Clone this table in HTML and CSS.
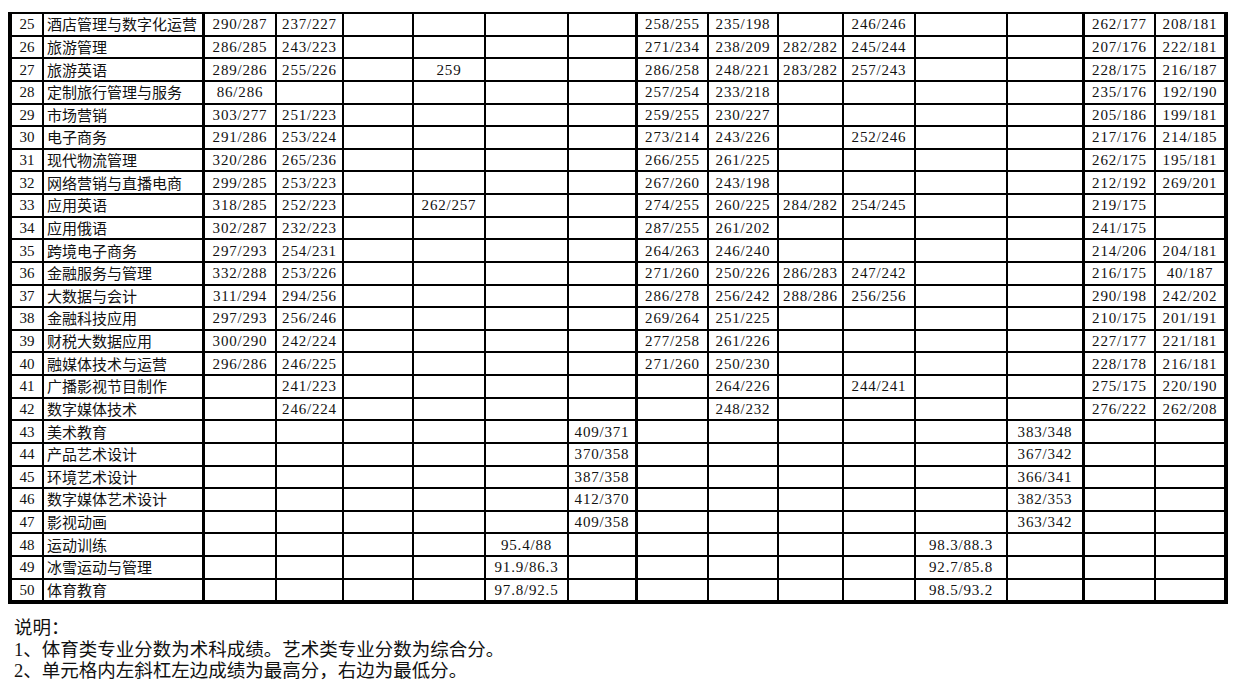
FILE: index.html
```html
<!DOCTYPE html>
<html lang="zh-CN">
<head>
<meta charset="utf-8">
<title>分数表</title>
<link rel="stylesheet" href="styles.css">
</head>
<body>
<div class="page">
<table class="scores">
<colgroup>
<col class="w-num"><col class="w-name"><col class="w-c1"><col class="w-c2"><col class="w-c3"><col class="w-c4"><col class="w-c5"><col class="w-c6"><col class="w-c7"><col class="w-c8"><col class="w-c9"><col class="w-c10"><col class="w-c11"><col class="w-c12"><col class="w-c13"><col class="w-c14">
</colgroup>
<tbody>
<tr><td>25</td><td class="nm">酒店管理与数字化运营</td><td>290/287</td><td>237/227</td><td></td><td></td><td></td><td></td><td>258/255</td><td>235/198</td><td></td><td>246/246</td><td></td><td></td><td>262/177</td><td>208/181</td></tr>
<tr><td>26</td><td class="nm">旅游管理</td><td>286/285</td><td>243/223</td><td></td><td></td><td></td><td></td><td>271/234</td><td>238/209</td><td>282/282</td><td>245/244</td><td></td><td></td><td>207/176</td><td>222/181</td></tr>
<tr><td>27</td><td class="nm">旅游英语</td><td>289/286</td><td>255/226</td><td></td><td>259</td><td></td><td></td><td>286/258</td><td>248/221</td><td>283/282</td><td>257/243</td><td></td><td></td><td>228/175</td><td>216/187</td></tr>
<tr><td>28</td><td class="nm">定制旅行管理与服务</td><td>86/286</td><td></td><td></td><td></td><td></td><td></td><td>257/254</td><td>233/218</td><td></td><td></td><td></td><td></td><td>235/176</td><td>192/190</td></tr>
<tr><td>29</td><td class="nm">市场营销</td><td>303/277</td><td>251/223</td><td></td><td></td><td></td><td></td><td>259/255</td><td>230/227</td><td></td><td></td><td></td><td></td><td>205/186</td><td>199/181</td></tr>
<tr><td>30</td><td class="nm">电子商务</td><td>291/286</td><td>253/224</td><td></td><td></td><td></td><td></td><td>273/214</td><td>243/226</td><td></td><td>252/246</td><td></td><td></td><td>217/176</td><td>214/185</td></tr>
<tr><td>31</td><td class="nm">现代物流管理</td><td>320/286</td><td>265/236</td><td></td><td></td><td></td><td></td><td>266/255</td><td>261/225</td><td></td><td></td><td></td><td></td><td>262/175</td><td>195/181</td></tr>
<tr><td>32</td><td class="nm">网络营销与直播电商</td><td>299/285</td><td>253/223</td><td></td><td></td><td></td><td></td><td>267/260</td><td>243/198</td><td></td><td></td><td></td><td></td><td>212/192</td><td>269/201</td></tr>
<tr><td>33</td><td class="nm">应用英语</td><td>318/285</td><td>252/223</td><td></td><td>262/257</td><td></td><td></td><td>274/255</td><td>260/225</td><td>284/282</td><td>254/245</td><td></td><td></td><td>219/175</td><td></td></tr>
<tr><td>34</td><td class="nm">应用俄语</td><td>302/287</td><td>232/223</td><td></td><td></td><td></td><td></td><td>287/255</td><td>261/202</td><td></td><td></td><td></td><td></td><td>241/175</td><td></td></tr>
<tr><td>35</td><td class="nm">跨境电子商务</td><td>297/293</td><td>254/231</td><td></td><td></td><td></td><td></td><td>264/263</td><td>246/240</td><td></td><td></td><td></td><td></td><td>214/206</td><td>204/181</td></tr>
<tr><td>36</td><td class="nm">金融服务与管理</td><td>332/288</td><td>253/226</td><td></td><td></td><td></td><td></td><td>271/260</td><td>250/226</td><td>286/283</td><td>247/242</td><td></td><td></td><td>216/175</td><td>40/187</td></tr>
<tr><td>37</td><td class="nm">大数据与会计</td><td>311/294</td><td>294/256</td><td></td><td></td><td></td><td></td><td>286/278</td><td>256/242</td><td>288/286</td><td>256/256</td><td></td><td></td><td>290/198</td><td>242/202</td></tr>
<tr><td>38</td><td class="nm">金融科技应用</td><td>297/293</td><td>256/246</td><td></td><td></td><td></td><td></td><td>269/264</td><td>251/225</td><td></td><td></td><td></td><td></td><td>210/175</td><td>201/191</td></tr>
<tr><td>39</td><td class="nm">财税大数据应用</td><td>300/290</td><td>242/224</td><td></td><td></td><td></td><td></td><td>277/258</td><td>261/226</td><td></td><td></td><td></td><td></td><td>227/177</td><td>221/181</td></tr>
<tr><td>40</td><td class="nm">融媒体技术与运营</td><td>296/286</td><td>246/225</td><td></td><td></td><td></td><td></td><td>271/260</td><td>250/230</td><td></td><td></td><td></td><td></td><td>228/178</td><td>216/181</td></tr>
<tr><td>41</td><td class="nm">广播影视节目制作</td><td></td><td>241/223</td><td></td><td></td><td></td><td></td><td></td><td>264/226</td><td></td><td>244/241</td><td></td><td></td><td>275/175</td><td>220/190</td></tr>
<tr><td>42</td><td class="nm">数字媒体技术</td><td></td><td>246/224</td><td></td><td></td><td></td><td></td><td></td><td>248/232</td><td></td><td></td><td></td><td></td><td>276/222</td><td>262/208</td></tr>
<tr><td>43</td><td class="nm">美术教育</td><td></td><td></td><td></td><td></td><td></td><td>409/371</td><td></td><td></td><td></td><td></td><td></td><td>383/348</td><td></td><td></td></tr>
<tr><td>44</td><td class="nm">产品艺术设计</td><td></td><td></td><td></td><td></td><td></td><td>370/358</td><td></td><td></td><td></td><td></td><td></td><td>367/342</td><td></td><td></td></tr>
<tr><td>45</td><td class="nm">环境艺术设计</td><td></td><td></td><td></td><td></td><td></td><td>387/358</td><td></td><td></td><td></td><td></td><td></td><td>366/341</td><td></td><td></td></tr>
<tr><td>46</td><td class="nm">数字媒体艺术设计</td><td></td><td></td><td></td><td></td><td></td><td>412/370</td><td></td><td></td><td></td><td></td><td></td><td>382/353</td><td></td><td></td></tr>
<tr><td>47</td><td class="nm">影视动画</td><td></td><td></td><td></td><td></td><td></td><td>409/358</td><td></td><td></td><td></td><td></td><td></td><td>363/342</td><td></td><td></td></tr>
<tr><td>48</td><td class="nm">运动训练</td><td></td><td></td><td></td><td></td><td>95.4/88</td><td></td><td></td><td></td><td></td><td></td><td>98.3/88.3</td><td></td><td></td><td></td></tr>
<tr><td>49</td><td class="nm">冰雪运动与管理</td><td></td><td></td><td></td><td></td><td>91.9/86.3</td><td></td><td></td><td></td><td></td><td></td><td>92.7/85.8</td><td></td><td></td><td></td></tr>
<tr><td>50</td><td class="nm">体育教育</td><td></td><td></td><td></td><td></td><td>97.8/92.5</td><td></td><td></td><td></td><td></td><td></td><td>98.5/93.2</td><td></td><td></td><td></td></tr>
</tbody>
</table>
<div class="notes">
<p>说明：</p>
<p>1、体育类专业分数为术科成绩。艺术类专业分数为综合分。</p>
<p>2、单元格内左斜杠左边成绩为最高分，右边为最低分。</p>
</div>
</div>
</body>
</html>
```

FILE: styles.css
```css
* {
  box-sizing: border-box;
}

body {
  margin: 0;
  background: #ffffff;
  color: #111111;
  font-family: "Liberation Serif", "Noto Sans CJK SC", serif;
}

.page {
  padding: 12px 0 0 8px;
}

.scores {
  border-collapse: separate;
  border-spacing: 0;
  table-layout: fixed;
  width: 1220px;
  border-left: 4px solid #000;
  border-top: 2px solid #000;
}

.w-num { width: 32px; }
.w-name { width: 161px; }
.w-c1 { width: 72px; }
.w-c2 { width: 67px; }
.w-c3 { width: 70px; }
.w-c4 { width: 72px; }
.w-c5 { width: 83px; }
.w-c6 { width: 69px; }
.w-c7 { width: 71px; }
.w-c8 { width: 70px; }
.w-c9 { width: 65px; }
.w-c10 { width: 72px; }
.w-c11 { width: 92px; }
.w-c12 { width: 77px; }
.w-c13 { width: 71px; }
.w-c14 { width: 72px; }

.scores td {
  border-right: 2px solid #000;
  border-bottom: 2px solid #000;
  height: 22.64px;
  padding: 0;
  text-align: center;
  vertical-align: middle;
  font-size: 15px;
  line-height: 18px;
  letter-spacing: 0.8px;
  white-space: nowrap;
  overflow: hidden;
}

.scores td:first-child {
  letter-spacing: 0;
}

.scores td.nm {
  text-align: left;
  padding-left: 3px;
  letter-spacing: 0;
  font-family: "Noto Sans CJK SC", sans-serif;
}

.scores td:nth-child(2),
.scores td:nth-child(8),
.scores td:nth-child(14) {
  border-right-width: 3px;
}

.scores td:last-child {
  border-right-width: 4px;
}

.scores tr:last-child td {
  border-bottom-width: 4px;
  height: 24.64px;
}

.notes {
  margin-top: 14px;
  padding-left: 6px;
  font-family: "Liberation Serif", "Noto Sans CJK SC", serif;
  font-size: 18.5px;
  line-height: 21.5px;
}

.notes p {
  margin: 0;
}
```
